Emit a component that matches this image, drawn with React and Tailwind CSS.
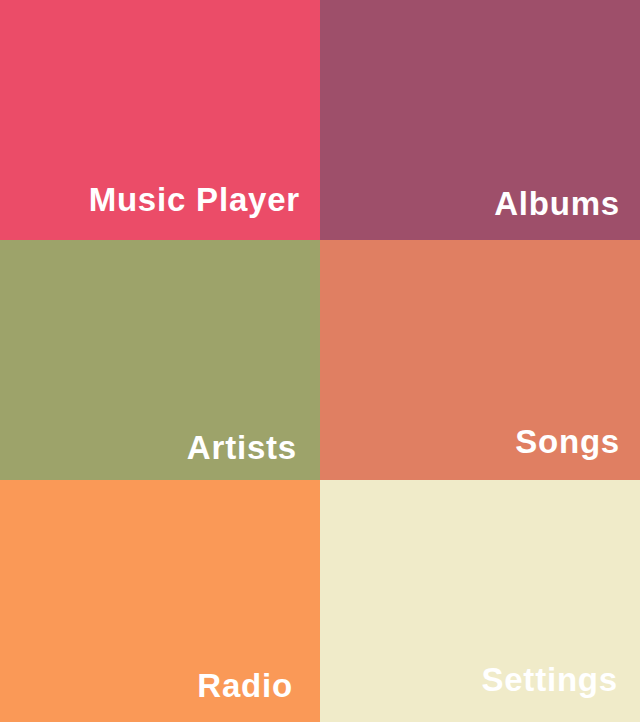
const TILES = [
  { label: 'Music Player', bg: 'bg-[#eb4c68]', pad: 'pr-[20px] pb-[24px]' },
  { label: 'Albums', bg: 'bg-[#9e4f6a]', pad: 'pr-[20px] pb-[20px]' },
  { label: 'Artists', bg: 'bg-[#9da36a]', pad: 'pr-[23px] pb-[16px]' },
  { label: 'Songs', bg: 'bg-[#e07f62]', pad: 'pr-[20px] pb-[22px]' },
  { label: 'Radio', bg: 'bg-[#fa9957]', pad: 'pr-[27px] pb-[20px]' },
  { label: 'Settings', bg: 'bg-[#f0ebc9]', pad: 'pr-[22px] pb-[26px]' },
];

export default function App() {
  return (
    <div className="grid h-screen w-full grid-cols-2 grid-rows-[240px_240px_1fr] font-['Liberation_Sans',Arial,sans-serif]">
      {TILES.map(t => (
        <div key={t.label} className={`flex items-end justify-end ${t.bg} ${t.pad}`}>
          <span className="text-[33px] font-bold leading-none tracking-[0.8px] text-white">{t.label}</span>
        </div>
      ))}
    </div>
  );
}
